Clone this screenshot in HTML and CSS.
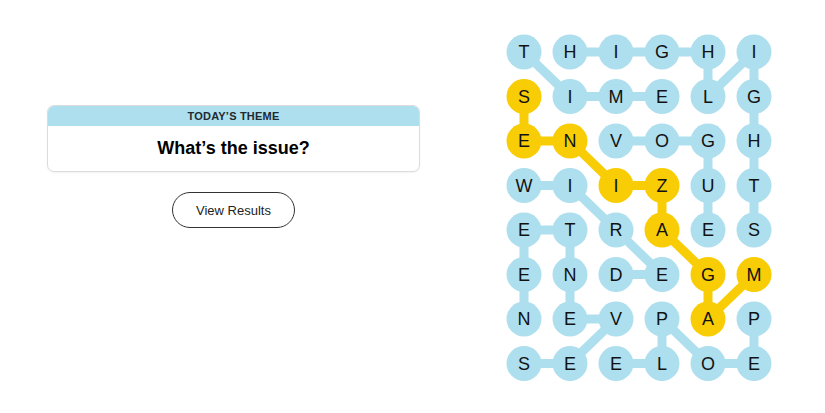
FILE: index.html
```html
<!DOCTYPE html>
<html lang="en">
<head>
  <meta charset="UTF-8" />
  <meta name="viewport" content="width=device-width, initial-scale=1.0" />
  <title>Strands</title>
  <link rel="stylesheet" href="styles.css">
</head>
<body>
  <div class="page">
    <!-- Tema do dia + botão -->
    <section class="side">
      <div class="theme-card">
        <div class="theme-head">TODAY’S THEME</div>
        <div class="theme-title">What’s the issue?</div>
      </div>
      <button class="results">View Results</button>
    </section>

    <!-- Tabuleiro -->
    <svg class="board" width="276" height="356" viewBox="0 0 276 356">
      <g class="links">
        <polyline points="23,22 69,66.5 161,66.5" />
        <polyline points="69,22 207,22 207,66.5 253,22 253,200" />
        <polyline points="115,111 207,111 207,200" />
        <polyline points="23,155.5 69,155.5 115,200 161,244.5 115,244.5" />
        <polyline points="23,333.5 69,333.5 115,289 69,289 69,200 23,200 23,289" />
        <polyline points="253,289 253,333.5 207,333.5 161,289 161,333.5 115,333.5" />
      </g>
      <g class="links spangram">
        <polyline points="23,66.5 23,111 69,111 115,155.5 161,155.5 161,200 207,244.5 207,289 253,244.5" />
      </g>

      <g class="cells">
        <circle cx="23" cy="22" r="17.5" /><circle cx="69" cy="22" r="17.5" /><circle cx="115" cy="22" r="17.5" /><circle cx="161" cy="22" r="17.5" /><circle cx="207" cy="22" r="17.5" /><circle cx="253" cy="22" r="17.5" />
        <circle cx="23" cy="66.5" r="17.5" class="gold" /><circle cx="69" cy="66.5" r="17.5" /><circle cx="115" cy="66.5" r="17.5" /><circle cx="161" cy="66.5" r="17.5" /><circle cx="207" cy="66.5" r="17.5" /><circle cx="253" cy="66.5" r="17.5" />
        <circle cx="23" cy="111" r="17.5" class="gold" /><circle cx="69" cy="111" r="17.5" class="gold" /><circle cx="115" cy="111" r="17.5" /><circle cx="161" cy="111" r="17.5" /><circle cx="207" cy="111" r="17.5" /><circle cx="253" cy="111" r="17.5" />
        <circle cx="23" cy="155.5" r="17.5" /><circle cx="69" cy="155.5" r="17.5" /><circle cx="115" cy="155.5" r="17.5" class="gold" /><circle cx="161" cy="155.5" r="17.5" class="gold" /><circle cx="207" cy="155.5" r="17.5" /><circle cx="253" cy="155.5" r="17.5" />
        <circle cx="23" cy="200" r="17.5" /><circle cx="69" cy="200" r="17.5" /><circle cx="115" cy="200" r="17.5" /><circle cx="161" cy="200" r="17.5" class="gold" /><circle cx="207" cy="200" r="17.5" /><circle cx="253" cy="200" r="17.5" />
        <circle cx="23" cy="244.5" r="17.5" /><circle cx="69" cy="244.5" r="17.5" /><circle cx="115" cy="244.5" r="17.5" /><circle cx="161" cy="244.5" r="17.5" /><circle cx="207" cy="244.5" r="17.5" class="gold" /><circle cx="253" cy="244.5" r="17.5" class="gold" />
        <circle cx="23" cy="289" r="17.5" /><circle cx="69" cy="289" r="17.5" /><circle cx="115" cy="289" r="17.5" /><circle cx="161" cy="289" r="17.5" /><circle cx="207" cy="289" r="17.5" class="gold" /><circle cx="253" cy="289" r="17.5" />
        <circle cx="23" cy="333.5" r="17.5" /><circle cx="69" cy="333.5" r="17.5" /><circle cx="115" cy="333.5" r="17.5" /><circle cx="161" cy="333.5" r="17.5" /><circle cx="207" cy="333.5" r="17.5" /><circle cx="253" cy="333.5" r="17.5" />
      </g>

      <g class="letters">
        <text x="23" y="22">T</text><text x="69" y="22">H</text><text x="115" y="22">I</text><text x="161" y="22">G</text><text x="207" y="22">H</text><text x="253" y="22">I</text>
        <text x="23" y="66.5">S</text><text x="69" y="66.5">I</text><text x="115" y="66.5">M</text><text x="161" y="66.5">E</text><text x="207" y="66.5">L</text><text x="253" y="66.5">G</text>
        <text x="23" y="111">E</text><text x="69" y="111">N</text><text x="115" y="111">V</text><text x="161" y="111">O</text><text x="207" y="111">G</text><text x="253" y="111">H</text>
        <text x="23" y="155.5">W</text><text x="69" y="155.5">I</text><text x="115" y="155.5">I</text><text x="161" y="155.5">Z</text><text x="207" y="155.5">U</text><text x="253" y="155.5">T</text>
        <text x="23" y="200">E</text><text x="69" y="200">T</text><text x="115" y="200">R</text><text x="161" y="200">A</text><text x="207" y="200">E</text><text x="253" y="200">S</text>
        <text x="23" y="244.5">E</text><text x="69" y="244.5">N</text><text x="115" y="244.5">D</text><text x="161" y="244.5">E</text><text x="207" y="244.5">G</text><text x="253" y="244.5">M</text>
        <text x="23" y="289">N</text><text x="69" y="289">E</text><text x="115" y="289">V</text><text x="161" y="289">P</text><text x="207" y="289">A</text><text x="253" y="289">P</text>
        <text x="23" y="333.5">S</text><text x="69" y="333.5">E</text><text x="115" y="333.5">E</text><text x="161" y="333.5">L</text><text x="207" y="333.5">O</text><text x="253" y="333.5">E</text>
      </g>
    </svg>
  </div>
</body>
</html>
```

FILE: styles.css
```css
:root {
  --azul: #aedfee;
  --amarelo: #f8cd05;
  --texto: #121212;
  --borda: #dcdcdc;
}

* {
  box-sizing: border-box;
  margin: 0;
  padding: 0;
}

body {
  font-family: 'Liberation Sans', Arial, sans-serif;
  background: #ffffff;
  color: var(--texto);
}

.page {
  display: flex;
  align-items: flex-start;
  padding-left: 47px;
}

.side {
  width: 373px;
  padding-top: 105px;
  display: flex;
  flex-direction: column;
  align-items: center;
}

.theme-card {
  width: 100%;
  border: 1px solid var(--borda);
  border-radius: 7px;
  overflow: hidden;
  box-shadow: 0 1px 2px rgba(0, 0, 0, 0.06);
}

.theme-head {
  height: 20px;
  line-height: 20px;
  background: var(--azul);
  text-align: center;
  font-size: 11px;
  font-weight: bold;
  letter-spacing: 0.2px;
  color: #1f2a30;
}

.theme-title {
  height: 45px;
  display: flex;
  align-items: center;
  justify-content: center;
  font-size: 18px;
  font-weight: bold;
  color: #000;
}

.results {
  margin-top: 20px;
  width: 123px;
  height: 36px;
  border: 1px solid #333;
  border-radius: 18px;
  background: #fff;
  color: #222;
  font-family: 'Liberation Sans', Arial, sans-serif;
  font-size: 13px;
  cursor: pointer;
}

.board {
  display: block;
  margin-top: 30px;
  margin-left: 81px;
}

.links polyline {
  fill: none;
  stroke: var(--azul);
  stroke-width: 9;
  stroke-linejoin: round;
  stroke-linecap: round;
}

.spangram polyline {
  stroke: var(--amarelo);
}

.cells circle {
  fill: var(--azul);
}

.cells circle.gold {
  fill: var(--amarelo);
}

.letters text {
  font-family: 'Liberation Sans', Arial, sans-serif;
  font-size: 18px;
  fill: var(--texto);
  text-anchor: middle;
  dominant-baseline: central;
}
```
